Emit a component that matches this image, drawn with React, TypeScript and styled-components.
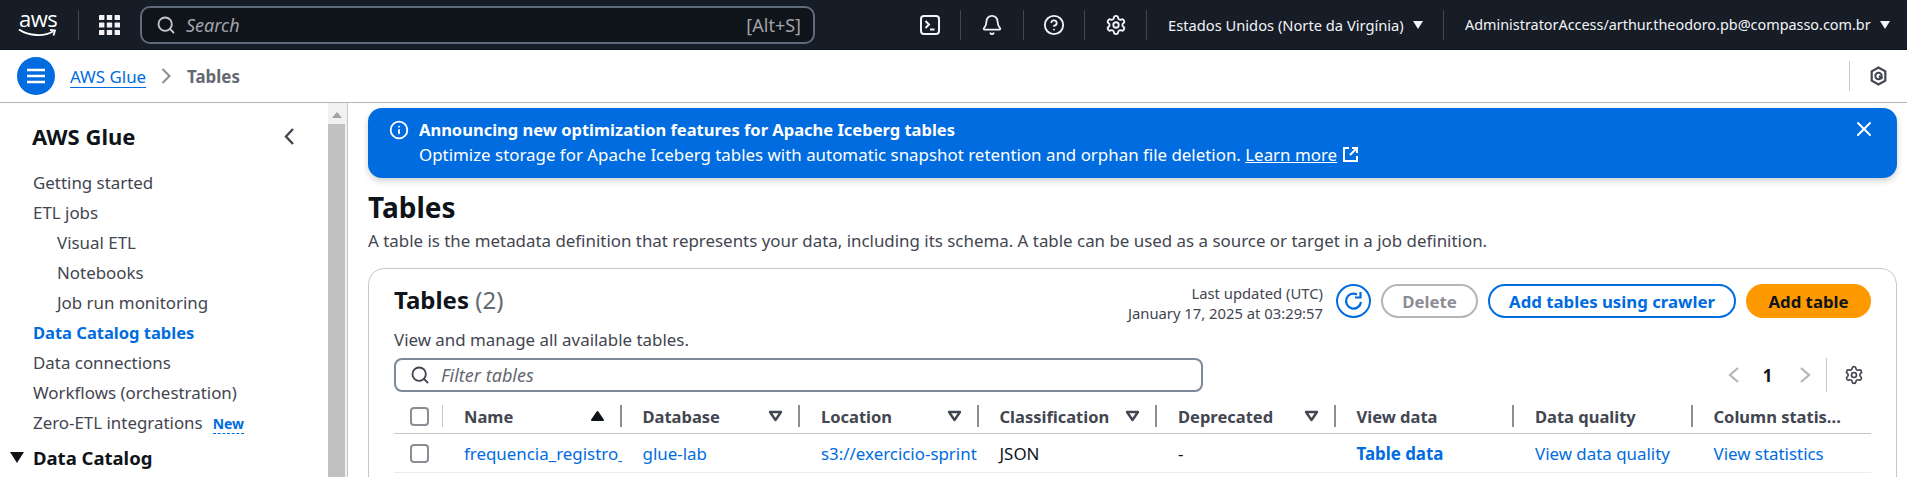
import React from 'react';
import styled, { createGlobalStyle } from 'styled-components';
import { Bell, CircleHelp, Info, Search, Settings, X } from 'lucide-react';

const GlobalStyle = createGlobalStyle`
  html, body {
    margin: 0;
    padding: 0;
    background: #fff;
  }
  body {
    font-family: "Noto Sans", Roboto, sans-serif;
    color: #0f141a;
    font-size: 16.9px;
  }
  * { box-sizing: border-box; }
`;

const Page = styled.div`
  width: 1907px;
  height: 477px;
  overflow: hidden;
  display: flex;
  flex-direction: column;
`;

const TopBar = styled.header`
  height: 50px;
  flex: none;
  background: #161d26;
  border-bottom: 1px solid #0f141a;
  display: flex;
  align-items: center;
  color: #f3f3f7;
`;

const LogoCell = styled.div`
  width: 79px;
  height: 30px;
  padding-left: 19px;
  position: relative;
  display: flex;
  flex-direction: column;
  border-right: 1px solid #424650;
`;

const LogoText = styled.span`
  font-family: "Open Sans", sans-serif;
  font-size: 22px;
  line-height: 17px;
  letter-spacing: -0.5px;
  color: #fff;
`;

const LogoSmile = styled.svg`
  position: absolute;
  left: 18px;
  top: 18px;
`;

const AppsButton = styled.div`
  width: 61px;
  padding-left: 20px;
  display: flex;
`;

const SearchBox = styled.div`
  width: 675px;
  height: 38px;
  margin-right: 85px;
  background: #0f141a;
  border: 2px solid #5f6b7a;
  border-radius: 10px;
  display: flex;
  align-items: center;
  padding: 0 12px 0 14px;
  font-size: 18px;
  color: #a3a3ab;
`;

const SearchPlaceholder = styled.span`
  font-style: italic;
  margin-left: 10px;
  flex: 1;
`;

const ToolCell = styled.div<{ $width: number }>`
  width: ${p => p.$width}px;
  height: 30px;
  display: flex;
  align-items: center;
  justify-content: center;
  border-right: 1px solid #424650;
`;

const MenuCell = styled.div<{ $width: number; $last?: boolean }>`
  width: ${p => p.$width}px;
  height: 30px;
  padding-left: 21px;
  display: flex;
  align-items: center;
  font-size: ${p => (p.$last ? 14.4 : 14.7)}px;
  white-space: nowrap;
  border-right: ${p => (p.$last ? 'none' : '1px solid #424650')};
`;

const Caret = styled.span`
  width: 0;
  height: 0;
  border-left: 5px solid transparent;
  border-right: 5px solid transparent;
  border-top: 8px solid currentColor;
  margin-left: 9px;
`;

const CrumbBar = styled.nav`
  height: 53px;
  flex: none;
  background: #fff;
  border-bottom: 1px solid #b4b4bb;
  display: flex;
  align-items: center;
  padding-left: 17px;
`;

const MenuRound = styled.div`
  width: 38px;
  height: 38px;
  border-radius: 50%;
  background: #006ce0;
  display: flex;
  align-items: center;
  justify-content: center;
  margin-right: 15px;
`;

const CrumbLink = styled.a`
  color: #006ce0;
  text-decoration: underline;
  text-underline-offset: 4px;
`;

const CrumbSeparator = styled.svg`
  margin: 0 16px 0 15px;
`;

const CrumbCurrent = styled.span`
  flex: 1;
  font-weight: 700;
  color: #656871;
`;

const CrumbTool = styled.div`
  width: 58px;
  height: 30px;
  border-left: 1px solid #c6c6cd;
  display: flex;
  align-items: center;
  justify-content: center;
`;

const Body = styled.div`
  flex: 1;
  min-height: 0;
  display: flex;
`;

const SideNav = styled.aside`
  width: 328px;
  flex: none;
  padding: 20px 0 0 32px;
  overflow: hidden;
`;

const SideHead = styled.div`
  display: flex;
  justify-content: space-between;
  align-items: center;
  height: 26px;
  padding-right: 33px;
  margin-bottom: 19px;
  font-size: 22px;
  font-weight: 700;
`;

const NavList = styled.ul`
  list-style: none;
  margin: 0;
  padding: 0;
`;

const NavItem = styled.li<{ $indent?: boolean; $active?: boolean }>`
  height: 30px;
  line-height: 30px;
  padding-left: ${p => (p.$indent ? 25 : 1)}px;
  color: ${p => (p.$active ? '#006ce0' : '#424650')};
  font-size: ${p => (p.$active ? 16.5 : 16.9)}px;
  font-weight: ${p => (p.$active ? 700 : 400)};
  white-space: nowrap;
`;

const NewTag = styled.span`
  color: #006ce0;
  font-size: 14px;
  font-weight: 700;
  margin-left: 10px;
  border-bottom: 1px dashed #006ce0;
`;

const SectionHead = styled.div`
  display: flex;
  align-items: center;
  gap: 9px;
  margin: 4px 0 0 -22px;
  font-size: 18.5px;
  font-weight: 700;
  height: 30px;
`;

const SectionCaret = styled(Caret)`
  margin: 0;
  border-left-width: 7px;
  border-right-width: 7px;
  border-top-width: 11px;
`;

const ScrollTrack = styled.div`
  width: 19px;
  flex: none;
  background: #f1f1f1;
  display: flex;
  flex-direction: column;
`;

const ScrollArrow = styled.span`
  margin: 9px 0 6px 4px;
  width: 0;
  height: 0;
  border-left: 5px solid transparent;
  border-right: 5px solid transparent;
  border-bottom: 6px solid #a3a3a3;
`;

const ScrollThumb = styled.div`
  width: 17px;
  flex: 1;
  background: #c1c1c1;
`;

const Main = styled.main`
  flex: 1;
  min-width: 0;
  padding: 5px 10px 0 20px;
  border-left: 1px solid #c6c6cd;
`;

const Banner = styled.section`
  height: 70px;
  background: #006ce0;
  border-radius: 14px;
  box-shadow: 0 3px 6px rgba(15, 20, 26, 0.2);
  color: #fff;
  display: flex;
  padding: 9px 21px 0;
  gap: 10px;
`;

const BannerIcon = styled.div`
  padding-top: 3px;
  display: flex;
`;

const BannerText = styled.div`
  flex: 1;
  line-height: 25px;
`;

const BannerTitle = styled.div`
  font-size: 16.5px;
  font-weight: 700;
`;

const BannerLink = styled.a`
  color: #fff;
  text-decoration: underline;
`;

const ExternalIcon = styled.svg`
  margin-left: 5px;
  vertical-align: -2px;
`;

const PageTitle = styled.h1`
  margin: 11px 0 0;
  font-size: 28px;
  line-height: 36px;
  font-weight: 700;
`;

const PageDescription = styled.p`
  margin: 4px 0 0;
  line-height: 24px;
  color: #424650;
  white-space: nowrap;
`;

const Card = styled.section`
  margin-top: 15px;
  border: 1px solid #c6c6cd;
  border-radius: 16px;
  padding: 15px 25px 0;
  height: 260px;
`;

const CardHead = styled.div`
  display: flex;
  justify-content: space-between;
  height: 44px;
`;

const CardTitle = styled.h2`
  margin: 0;
  font-size: 24px;
  line-height: 32px;
  font-weight: 700;
`;

const Count = styled.span`
  font-weight: 400;
  color: #656871;
`;

const Actions = styled.div`
  display: flex;
  align-items: flex-start;
`;

const Updated = styled.div`
  text-align: right;
  font-size: 14.8px;
  line-height: 20px;
  color: #424650;
  margin: -1px 13px 0 0;
`;

const RoundIcon = styled.div`
  width: 35px;
  height: 34px;
  border: 2px solid #006ce0;
  border-radius: 50%;
  display: flex;
  align-items: center;
  justify-content: center;
  margin-right: 10px;
`;

const Button = styled.button<{ $variant: 'disabled' | 'normal' | 'primary'; $width: number }>`
  width: ${p => p.$width}px;
  height: 34px;
  margin-left: ${p => (p.$variant === 'disabled' ? 0 : 10)}px;
  border-radius: 17px;
  font: 700 16.8px "Noto Sans", Roboto, sans-serif;
  border: 2px solid ${p => ({ disabled: '#b4b4bb', normal: '#006ce0', primary: '#ff9900' }[p.$variant])};
  color: ${p => ({ disabled: '#8c8c94', normal: '#006ce0', primary: '#0f141a' }[p.$variant])};
  background: ${p => (p.$variant === 'primary' ? '#ff9900' : '#fff')};
  padding: 0;
`;

const CardDescription = styled.div`
  line-height: 24px;
  color: #424650;
  height: 30px;
`;

const FilterRow = styled.div`
  display: flex;
  align-items: center;
  height: 34px;
`;

const FilterInput = styled.div`
  width: 809px;
  height: 34px;
  border: 2px solid #7d8998;
  border-radius: 8px;
  display: flex;
  align-items: center;
  padding-left: 14px;
  gap: 11px;
  color: #424650;
`;

const FilterPlaceholder = styled.span`
  font-size: 18px;
  font-style: italic;
  color: #656871;
`;

const Pager = styled.div`
  margin-left: auto;
  display: flex;
  align-items: center;
  height: 34px;
`;

const PagerChevron = styled.span`
  display: flex;
  justify-content: center;
  width: 24px;
  height: 16px;
`;

const PagerNumber = styled.span`
  width: 47px;
  padding-right: 4px;
  text-align: center;
  font-weight: 700;
`;

const PagerGear = styled.div`
  margin-left: 9px;
  width: 45px;
  height: 34px;
  padding-left: 17px;
  border-left: 1px solid #c6c6cd;
  display: flex;
  align-items: center;
  color: #424650;
`;

const TableRow = styled.div<{ $head?: boolean }>`
  display: grid;
  grid-template-columns: 49px repeat(8, 178.5px);
  align-items: center;
  height: ${p => (p.$head ? 42 : 39)}px;
  border-bottom: ${p => (p.$head ? '1px solid #c6c6cd' : '1px solid #ebebf0')};
  padding-top: ${p => (p.$head ? 7 : 0)}px;
`;

const CheckCell = styled.div<{ $divider?: boolean }>`
  height: 22px;
  padding-left: 16px;
  display: flex;
  align-items: center;
  border-right: ${p => (p.$divider ? '1px solid #c6c6cd' : 'none')};
`;

const Checkbox = styled.span`
  width: 19px;
  height: 19px;
  border: 2px solid #8c8c94;
  border-radius: 4px;
  background: #fff;
`;

const HeadCell = styled.div<{ $last?: boolean }>`
  height: 22px;
  padding: 0 15px 0 21px;
  display: flex;
  align-items: center;
  justify-content: space-between;
  font-size: 16.5px;
  font-weight: 700;
  color: #424650;
  white-space: nowrap;
  border-right: ${p => (p.$last ? 'none' : '2px solid #8c8c94')};
`;

const DataCell = styled.div`
  padding-left: 21px;
  white-space: nowrap;
  overflow: hidden;
  color: #0f141a;
`;

const CellLink = styled.a<{ $strong?: boolean }>`
  color: #006ce0;
  font-weight: ${p => (p.$strong ? 700 : 400)};
`;

const columns: { name: string; sort?: 'solid' | 'hollow' }[] = [
  { name: 'Name', sort: 'solid' },
  { name: 'Database', sort: 'hollow' },
  { name: 'Location', sort: 'hollow' },
  { name: 'Classification', sort: 'hollow' },
  { name: 'Deprecated', sort: 'hollow' },
  { name: 'View data' },
  { name: 'Data quality' },
  { name: 'Column statis...' },
];

const navItems = [
  { label: 'Getting started' },
  { label: 'ETL jobs' },
  { label: 'Visual ETL', indent: true },
  { label: 'Notebooks', indent: true },
  { label: 'Job run monitoring', indent: true },
  { label: 'Data Catalog tables', active: true },
  { label: 'Data connections' },
  { label: 'Workflows (orchestration)' },
];

const AppsIcon = () => (
  <svg width="21" height="20" viewBox="0 0 21 20" fill="#f3f3f7">
    {[0, 7.5, 15].map(y =>
      [0, 7.8, 15.6].map(x => <rect key={`${x}-${y}`} x={x} y={y} width="5.4" height="5" rx="0.6" />),
    )}
  </svg>
);

const TerminalIcon = () => (
  <svg width="20" height="20" viewBox="0 0 20 20" fill="none" stroke="#f3f3f7" strokeWidth="2">
    <rect x="1" y="1" width="18" height="18" rx="3" />
    <path d="M5.5 6l3.5 3.5L5.5 13M10 14.5h4.5" />
  </svg>
);

const CloudShellHex = () => (
  <svg width="17" height="20" viewBox="0 0 17 20" fill="none" stroke="#424650" strokeWidth="2.2">
    <path d="M8.5 1.5l6.8 3.8v9.4l-6.8 3.8-6.8-3.8V5.3z" />
    <circle cx="8.5" cy="10" r="3.2" strokeWidth="2" />
    <path d="M9 10l3.5 2.5" />
  </svg>
);

const RefreshIcon = () => (
  <svg width="20" height="20" viewBox="0 0 20 20" fill="none" stroke="#006ce0" strokeWidth="2.2">
    <path d="M17 11a7.5 7.5 0 1 1-4-7.6" />
    <path d="M16.5 1v5.5H11" />
  </svg>
);

const SortIcon = ({ solid }: { solid?: boolean }) =>
  solid ? (
    <svg width="15" height="12" viewBox="0 0 15 12" fill="#0f141a" stroke="#0f141a" strokeWidth="2" strokeLinejoin="round">
      <path d="M7.5 2l5.5 8H2z" />
    </svg>
  ) : (
    <svg width="15" height="12" viewBox="0 0 15 12" fill="#fff" stroke="#424650" strokeWidth="2.4" strokeLinejoin="round">
      <path d="M2 2h11l-5.5 8z" />
    </svg>
  );

const Chevron = ({ dir, color, w = 12, h = 16, weight = 2.2 }: { dir: 'left' | 'right'; color: string; w?: number; h?: number; weight?: number }) => (
  <svg width={w} height={h} viewBox={`0 0 ${w} ${h}`} fill="none" stroke={color} strokeWidth={weight}>
    {dir === 'left' ? (
      <path d={`M${w - 2} 1L2 ${h / 2}l${w - 4} ${h / 2 - 1}`} />
    ) : (
      <path d={`M2 1l${w - 4} ${h / 2 - 1}L2 ${h - 1}`} />
    )}
  </svg>
);

export default function App() {
  return (
    <>
      <GlobalStyle />
      <Page>
        <TopBar>
          <LogoCell>
            <LogoText>aws</LogoText>
            <LogoSmile width="39" height="10" viewBox="0 0 39 10" fill="none" stroke="#fff" strokeWidth="1.8">
              <path d="M1 1.5C11 8.5 27 8.5 35 3.5M32 2l5 .5-1.5 5" />
            </LogoSmile>
          </LogoCell>
          <AppsButton>
            <AppsIcon />
          </AppsButton>
          <SearchBox>
            <Search size={20} color="#c6c6cd" strokeWidth={2.2} />
            <SearchPlaceholder>Search</SearchPlaceholder>
            <span>[Alt+S]</span>
          </SearchBox>
          <ToolCell $width={61}>
            <TerminalIcon />
          </ToolCell>
          <ToolCell $width={63}>
            <Bell size={22} strokeWidth={2} />
          </ToolCell>
          <ToolCell $width={61}>
            <CircleHelp size={22} strokeWidth={2} />
          </ToolCell>
          <ToolCell $width={62}>
            <Settings size={22} strokeWidth={2} />
          </ToolCell>
          <MenuCell $width={297}>
            Estados Unidos (Norte da Virgínia)
            <Caret />
          </MenuCell>
          <MenuCell $width={462} $last>
            AdministratorAccess/arthur.theodoro.pb@compasso.com.br
            <Caret />
          </MenuCell>
        </TopBar>

        <CrumbBar>
          <MenuRound>
            <svg width="20" height="16" viewBox="0 0 20 16" stroke="#fff" strokeWidth="2.4">
              <path d="M1 2h18M1 8h18M1 14h18" />
            </svg>
          </MenuRound>
          <CrumbLink>AWS Glue</CrumbLink>
          <CrumbSeparator width="10" height="16" viewBox="0 0 10 16" fill="none" stroke="#8c8c94" strokeWidth="2">
            <path d="M1.5 1l7 7-7 7" />
          </CrumbSeparator>
          <CrumbCurrent>Tables</CrumbCurrent>
          <CrumbTool>
            <CloudShellHex />
          </CrumbTool>
        </CrumbBar>

        <Body>
          <SideNav>
            <SideHead>
              AWS Glue
              <Chevron dir="left" color="#424650" w={11} h={17} weight={2.4} />
            </SideHead>
            <NavList>
              {navItems.map(item => (
                <NavItem key={item.label} $indent={item.indent} $active={item.active}>
                  {item.label}
                </NavItem>
              ))}
              <NavItem>
                Zero-ETL integrations
                <NewTag>New</NewTag>
              </NavItem>
            </NavList>
            <SectionHead>
              <SectionCaret />
              Data Catalog
            </SectionHead>
          </SideNav>
          <ScrollTrack>
            <ScrollArrow />
            <ScrollThumb />
          </ScrollTrack>

          <Main>
            <Banner>
              <BannerIcon>
                <Info size={20} strokeWidth={2.2} />
              </BannerIcon>
              <BannerText>
                <BannerTitle>Announcing new optimization features for Apache Iceberg tables</BannerTitle>
                Optimize storage for Apache Iceberg tables with automatic snapshot retention and orphan file deletion.{' '}
                <BannerLink>Learn more</BannerLink>
                <ExternalIcon width="17" height="17" viewBox="0 0 17 17" fill="none" stroke="#fff" strokeWidth="2">
                  <path d="M7 2H2v13h13v-5M10 2h5v5M15 2L8 9" />
                </ExternalIcon>
              </BannerText>
              <X size={24} strokeWidth={2} />
            </Banner>

            <PageTitle>Tables</PageTitle>
            <PageDescription>
              A table is the metadata definition that represents your data, including its schema. A table can be used as
              a source or target in a job definition.
            </PageDescription>

            <Card>
              <CardHead>
                <CardTitle>
                  Tables <Count>(2)</Count>
                </CardTitle>
                <Actions>
                  <Updated>
                    Last updated (UTC)
                    <br />
                    January 17, 2025 at 03:29:57
                  </Updated>
                  <RoundIcon>
                    <RefreshIcon />
                  </RoundIcon>
                  <Button $variant="disabled" $width={97}>
                    Delete
                  </Button>
                  <Button $variant="normal" $width={248}>
                    Add tables using crawler
                  </Button>
                  <Button $variant="primary" $width={125}>
                    Add table
                  </Button>
                </Actions>
              </CardHead>
              <CardDescription>View and manage all available tables.</CardDescription>
              <FilterRow>
                <FilterInput>
                  <Search size={20} strokeWidth={2.2} />
                  <FilterPlaceholder>Filter tables</FilterPlaceholder>
                </FilterInput>
                <Pager>
                  <PagerChevron>
                    <Chevron dir="left" color="#b4b4bb" />
                  </PagerChevron>
                  <PagerNumber>1</PagerNumber>
                  <PagerChevron>
                    <Chevron dir="right" color="#b4b4bb" />
                  </PagerChevron>
                  <PagerGear>
                    <Settings size={20} strokeWidth={2} />
                  </PagerGear>
                </Pager>
              </FilterRow>
              <TableRow $head>
                <CheckCell $divider>
                  <Checkbox />
                </CheckCell>
                {columns.map((c, i) => (
                  <HeadCell key={c.name} $last={i === columns.length - 1}>
                    {c.name}
                    {c.sort && <SortIcon solid={c.sort === 'solid'} />}
                  </HeadCell>
                ))}
              </TableRow>
              <TableRow>
                <CheckCell>
                  <Checkbox />
                </CheckCell>
                <DataCell>
                  <CellLink>frequencia_registro_</CellLink>
                </DataCell>
                <DataCell>
                  <CellLink>glue-lab</CellLink>
                </DataCell>
                <DataCell>
                  <CellLink>s3://exercicio-sprint</CellLink>
                </DataCell>
                <DataCell>JSON</DataCell>
                <DataCell>-</DataCell>
                <DataCell>
                  <CellLink $strong>Table data</CellLink>
                </DataCell>
                <DataCell>
                  <CellLink>View data quality</CellLink>
                </DataCell>
                <DataCell>
                  <CellLink>View statistics</CellLink>
                </DataCell>
              </TableRow>
            </Card>
          </Main>
        </Body>
      </Page>
    </>
  );
}
